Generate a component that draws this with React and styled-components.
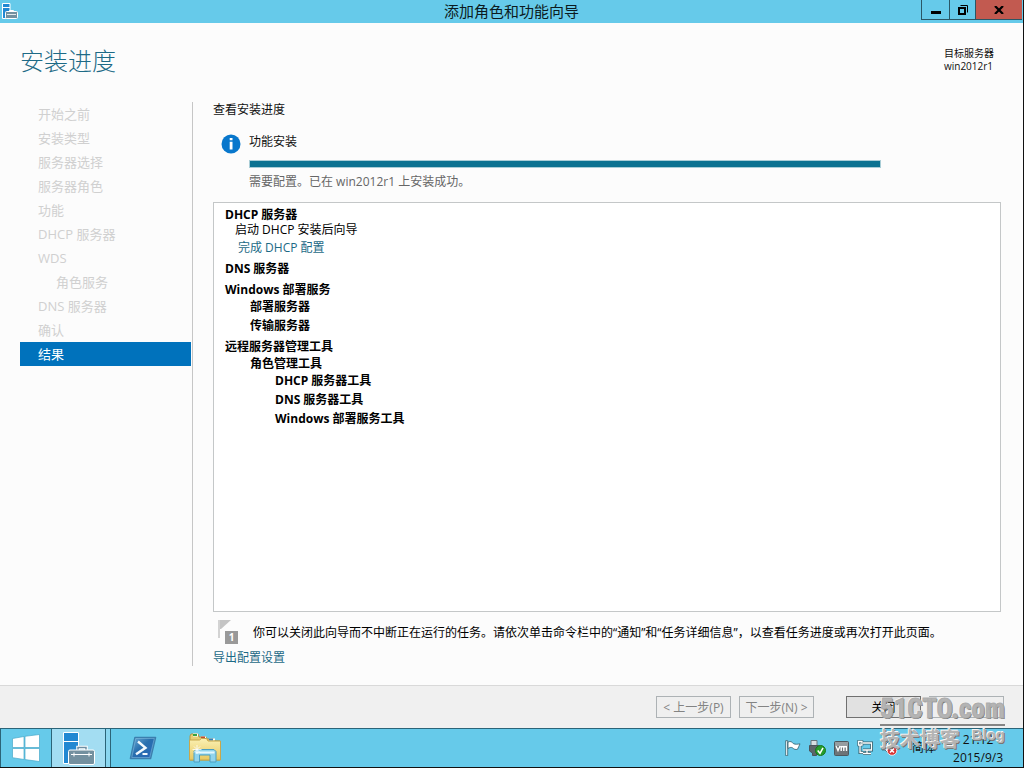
import React from 'react';
import styled, { createGlobalStyle } from 'styled-components';

const GlobalStyle = createGlobalStyle`
  * {
    box-sizing: border-box;
  }

  body {
    margin: 0;
    font-family: 'Open Sans', 'Noto Sans CJK SC', sans-serif;
    font-size: 12px;
    line-height: 16px;
    color: #111;
  }

  h1, h2, h3, p, ul, ol {
    margin: 0;
    padding: 0;
    font-size: inherit;
    font-weight: inherit;
  }

  ul, ol {
    list-style: none;
  }

  button {
    font: inherit;
    padding: 0;
  }

  svg {
    display: block;
  }
`;

const Desktop = styled.div`
  position: relative;
  min-height: 100vh;
  display: flex;
  flex-direction: column;
  background: #fcfcfc;
  border-right: 1px solid #111;
  border-bottom: 1px solid #111;
`;

const TitleBar = styled.header`
  height: 23px;
  display: grid;
  grid-template-columns: 1fr auto 1fr;
  background: #66caea;

  h1 {
    font-size: 15px;
    line-height: 23px;
    color: #0c1a20;
  }
`;

const AppIcon = styled.div`
  padding: 3px 0 0 2px;
`;

const WindowControls = styled.div`
  display: flex;
  justify-content: flex-end;
  align-items: flex-start;
  padding-right: 1px;
`;

const ControlButton = styled.button`
  width: ${(p) => p.$width};
  height: 20px;
  display: flex;
  align-items: center;
  justify-content: center;
  background: ${(p) => (p.$close ? '#c25a50' : '#66caea')};
  border: 1px solid #2a5766;
  border-width: 0 0 1px 1px;
`;

const PageHeader = styled.div`
  display: flex;
  justify-content: space-between;
  align-items: flex-start;
  height: 79px;
  padding: 22px 29px 0 20px;

  h2 {
    font-size: 24px;
    font-weight: 300;
    line-height: 32px;
    color: #1d6a86;
  }
`;

const Target = styled.p`
  padding-top: 2px;
  line-height: 13px;
  font-size: 10px;
`;

const Wizard = styled.main`
  flex: 1;
  display: flex;
  padding: 0 22px 19px 20px;
`;

const Steps = styled.nav`
  width: 173px;
  flex: none;
  border-right: 1px solid #c6c6c6;
  padding-right: 1px;
`;

const Step = styled.li`
  height: 24px;
  padding-left: ${(p) => (p.$nested ? '36px' : '18px')};
  font-size: 13px;
  line-height: 24px;
  color: ${(p) => (p.$current ? '#fff' : '#d0d0d0')};
  background: ${(p) => (p.$current ? '#0072bc' : 'transparent')};
`;

const Content = styled.section`
  flex: 1;
  min-width: 0;
  display: flex;
  flex-direction: column;
  padding-left: 20px;
`;

const Status = styled.div`
  display: grid;
  grid-template-columns: 20px minmax(0, 632px);
  column-gap: 8px;
  padding: 16px 0 12px 8px;
`;

const Progress = styled.div`
  height: 8px;
  margin: 10px 0 6px;
  background: #0b7291;
  border: 1px solid #a9cdd6;
`;

const Muted = styled.p`
  color: #666;
`;

const Results = styled.div`
  flex: 1;
  display: flex;
  flex-direction: column;
  gap: 6px;
  padding: 4px 11px;
  background: #fff;
  border: 1px solid #c4c7c8;
  line-height: 15px;
  color: #000;
`;

const Feature = styled.h3`
  font-weight: 700;
`;

const Children = styled.ul`
  display: flex;
  flex-direction: column;
  gap: 4px;
  padding: 2px 0 0 25px;
`;

const Task = styled.p`
  padding-left: 10px;
`;

const Link = styled.a`
  color: #1d6a86;
  text-decoration: none;
`;

const TaskLink = styled.p`
  padding: 3px 0 0 13px;
`;

const Notice = styled.div`
  display: flex;
  gap: 14px;
  padding: 7px 0 0 4px;
  color: #000;

  p {
    padding-top: 6px;
    white-space: nowrap;
  }
`;

const ExportRow = styled.p`
  padding-top: 4px;
`;

const Footer = styled.footer`
  display: flex;
  justify-content: flex-end;
  gap: 8px;
  height: 43px;
  padding: 10px 19px 0;
  background: #f0f0f0;
  border-top: 1px solid #d9d9d9;
`;

const WizardButton = styled.button`
  width: 75px;
  height: 22px;
  padding-top: 2px;
  line-height: 18px;
  color: ${(p) => (p.disabled ? '#838383' : '#000')};
  background: ${(p) => (p.disabled ? '#efefef' : '#e1e1e1')};
  border: 1px solid ${(p) => (p.disabled ? '#adb2b5' : '#707070')};
  margin-left: ${(p) => (p.$apart ? '24px' : '0')};
`;

const Taskbar = styled.div`
  display: flex;
  height: 39px;
  background: #66caea;
  border-top: 1px solid #2b6478;
  border-left: 1px solid #2b6478;
`;

const TaskButton = styled.button`
  width: ${(p) => p.$width};
  display: flex;
  align-items: center;
  justify-content: center;
  background: ${(p) => (p.$active ? '#a3ddf2' : 'transparent')};
  border: solid #2b6478;
  border-width: ${(p) => (p.$active ? '0 1px' : '0')};
`;

const StackEdge = styled.div`
  width: 5px;
  background: #8ad6ef;
  border-right: 1px solid #2b6478;
`;

const Tray = styled.div`
  flex: 1;
  display: flex;
  justify-content: flex-end;
  align-items: center;
  gap: 8px;
  padding-right: 20px;
`;

const InputMode = styled.span`
  padding: 0 9px 0 6px;
`;

const Clock = styled.time`
  display: flex;
  flex-direction: column;
  align-items: center;
  line-height: 18px;
  padding-top: 2px;
`;

const Watermark = styled.div`
  position: absolute;
  right: 18px;
  bottom: 13px;
  width: 125px;
  pointer-events: none;
  color: #b4b4b4;
  font-weight: 700;
  text-shadow: -1px -1px 0 #f6f6f6, 1px 1px 0 #777;
`;

const WatermarkName = styled.div`
  font-family: 'Liberation Sans Narrow', 'Roboto Condensed', 'Liberation Sans', sans-serif;
  font-size: 27px;
  line-height: 30px;
  text-align: right;
  white-space: nowrap;
  -webkit-text-stroke: 1px #acacac;
  border-bottom: 2px solid #858585;
`;

const WatermarkSub = styled.div`
  display: flex;
  justify-content: space-between;
  align-items: flex-start;
  font-size: 20px;
  line-height: 28px;

  small {
    font-family: 'Liberation Sans', sans-serif;
    font-size: 15px;
    line-height: 18px;
  }
`;

const ServerIcon = () => (
  <svg width="32" height="33" viewBox="0 0 32 33" fill="none">
    <path d="M.5.5h15v31H.5z" fill="#2188d2" stroke="#fff" />
    <path d="M.5 9.500h15" stroke="#fff" />
    <path d="M15 18v-2.500h8V18" stroke="#fff" strokeWidth="3.500" />
    <path d="M15 18v-2.500h8V18" stroke="#6c8ea3" strokeWidth="1.500" />
    <rect x="5.500" y="18" width="26" height="14.500" rx="1.500" fill="#73909f" stroke="#fff" />
    <path d="M8 22.500h21M11 20.500v4M26 20.500v4" stroke="#fff" />
  </svg>
);

const SmallServerIcon = () => (
  <svg width="16" height="16" viewBox="0 0 16 16" fill="none">
    <path d="M.5.5h7.500v15H.5z" fill="#2188d2" stroke="#fff" />
    <path d="M.5 4.500H8" stroke="#fff" />
    <path d="M7.500 9V7.500h4V9" stroke="#fff" />
    <rect x="3.500" y="8.500" width="12" height="7" rx="1" fill="#73909f" stroke="#fff" />
    <path d="M5 11.500h9" stroke="#fff" strokeWidth=".8" />
  </svg>
);

const InfoIcon = () => (
  <svg width="20" height="20" viewBox="0 0 20 20">
    <circle cx="10" cy="10" r="9.500" fill="#0877cc" />
    <path d="M8.700 4h2.800v2.300H8.700zM8.700 7.800h2.800V15.500H8.700z" fill="#fff" />
  </svg>
);

const NoticeIcon = () => (
  <svg width="22" height="27" viewBox="0 0 22 27">
    <path d="M1 1h2v18H1z" fill="#d3d3d3" />
    <path d="M3 1h11L4 10H3z" fill="#c4c4c4" />
    <rect x="8" y="12" width="13" height="13" fill="#999" />
    <text x="14.500" y="22" fontSize="10" fontWeight="700" fill="#fff" textAnchor="middle">1</text>
  </svg>
);

const WindowsLogo = () => (
  <svg width="28" height="28" viewBox="0 0 28 28" fill="#fff" stroke="#48a9ca" strokeWidth=".7">
    <path d="M.5 4.500l11.500-2v11H.5zM13 2.300L27.500.5v13H13zM.5 14.500H12v11l-11.500-1.800zM13 14.500h14.500v13L13 25.600z" />
  </svg>
);

const PowerShellIcon = () => (
  <svg width="28" height="24" viewBox="0 0 28 24">
    <defs>
      <linearGradient id="ps" x1="0" y1="0" x2="1" y2="1">
        <stop offset="0" stopColor="#70afd8" />
        <stop offset=".45" stopColor="#286fae" />
        <stop offset="1" stopColor="#2865ba" />
      </linearGradient>
    </defs>
    <path d="M6 1.500h20.500L21.500 22.500H1.500z" fill="url(#ps)" stroke="#3b7fae" strokeWidth="1.600" strokeLinejoin="round" />
    <path d="M6.700 2.500h18.600L20.700 21.500H2.800z" fill="none" stroke="#8cc4e4" strokeWidth=".5" />
    <path d="M9 5.500l7.500 6.300-9.500 6.500" fill="none" stroke="#f2f9fd" strokeWidth="2.400" />
    <path d="M13.500 18h5" stroke="#f2f9fd" strokeWidth="2" />
  </svg>
);

const ExplorerIcon = () => (
  <svg width="34" height="32" viewBox="0 0 34 32">
    <defs>
      <linearGradient id="folder" x1="0" y1="0" x2="0" y2="1">
        <stop offset="0" stopColor="#fbf1b4" />
        <stop offset="1" stopColor="#e7c860" />
      </linearGradient>
    </defs>
    <path d="M2 4l1-2h7l1 3h7l1 2h7l1 2h5v19H2z" fill="#e8ce76" stroke="#b79843" />
    <path d="M5 1.500h5v3H5zM13 4.500h5v2h-5zM21 6.500h6v2h-6z" fill="#fff" />
    <path d="M5 2h4v2H5z" fill="#35a443" />
    <path d="M13 4.500h4v2h-4z" fill="#bd4b30" />
    <path d="M21 6.500h4v2h-4z" fill="#3880b5" />
    <path d="M1.500 8h10l2-1.500h5L20 9h12.500v19h-31z" fill="url(#folder)" stroke="#c8a74b" />
    <path d="M6 30V19.500l2-2h18l2 2V30h-6v-7H11.500v7z" fill="#91d4ed" stroke="#4b9fc1" />
    <path d="M7.500 20.500h19" stroke="#e2f8ff" strokeWidth="2" />
    <path d="M9 13v9M4.500 17.500h9M6 14.500l6 6M12 14.500l-6 6" stroke="#fff" strokeWidth=".8" />
  </svg>
);

const FlagIcon = () => (
  <svg width="16" height="16" viewBox="0 0 16 16">
    <path d="M.7.700h2v15h-2z" fill="#fff" stroke="#315d6b" strokeWidth=".8" />
    <path d="M3 2c3-1.300 4 .2 5.500 1.700 2 .8 4 .6 6.500.1-.7 2-2 4-2.500 5.500-2 .5-3.500 0-5-1.500C6 7 4.500 7.500 3 8.500z" fill="#fff" stroke="#315d6b" strokeWidth=".8" />
  </svg>
);

const UsbIcon = () => (
  <svg width="17" height="16" viewBox="0 0 17 16">
    <path d="M2 .5h6V6H2z" fill="#d7dfe2" stroke="#66747b" />
    <path d="M.5 5.500h9V11L7.500 13v2.500h-4V13l-3-2z" fill="#5c656a" stroke="#4a555b" />
    <circle cx="11.500" cy="10.500" r="5" fill="#279d2b" stroke="#16761c" />
    <path d="M8.700 10.500l2.300 2.800L14 7.800" fill="none" stroke="#fff" strokeWidth="1.500" />
  </svg>
);

const VmIcon = () => (
  <svg width="15" height="15" viewBox="0 0 15 15">
    <rect x=".5" y=".5" width="14" height="14" rx="1" fill="#6d7477" stroke="#4e585d" />
    <path d="M1 1h13v4H1z" fill="#969da0" />
    <path d="M2 5l2 4.500L6 5M7.200 10V5.700h2.600V10M9.800 5.700h2.700V10" fill="none" stroke="#fff" strokeWidth="1.400" />
  </svg>
);

const NetworkIcon = () => (
  <svg width="16" height="16" viewBox="0 0 16 16" fill="none">
    <path d="M6 3h8.500v7H6M10 10v3.500M6 13.500h8M3 5v7.500h3" stroke="#315d6b" strokeWidth="3" />
    <path d="M1.500 1.500h3.500V5H1.500z" fill="#fff" stroke="#315d6b" strokeWidth="2.500" />
    <path d="M6 3h8.500v7H6M10 10v3.500M6 13.500h8M3 5v7.500h3M1.500 1.500h3.500V5H1.500z" stroke="#fff" strokeWidth="1.300" />
  </svg>
);

const MutedSpeakerIcon = () => (
  <svg width="17" height="16" viewBox="0 0 17 16">
    <path d="M1 5h3l4-4v13l-4-4H1z" fill="#fff" stroke="#315d6b" strokeWidth=".8" />
    <circle cx="11" cy="10.500" r="4.800" fill="#d63232" stroke="#fff" strokeWidth=".8" />
    <path d="M9 8.500l4 4M13 8.500l-4 4" stroke="#fff" strokeWidth="1.600" />
  </svg>
);

const steps = [
  '开始之前',
  '安装类型',
  '服务器选择',
  '服务器角色',
  '功能',
  'DHCP 服务器',
  'WDS',
  '角色服务',
  'DNS 服务器',
  '确认',
  '结果',
];

const App = () => {
  return (
    <Desktop>
      <GlobalStyle />
      <TitleBar>
        <AppIcon>
          <SmallServerIcon />
        </AppIcon>
        <h1>添加角色和功能向导</h1>
        <WindowControls>
          <ControlButton $width="28px" aria-label="最小化">
            <svg width="10" height="10" viewBox="0 0 10 10">
              <path d="M0 6h10v3H0z" />
            </svg>
          </ControlButton>
          <ControlButton $width="26px" aria-label="还原">
            <svg width="10" height="10" viewBox="0 0 10 10" fill="none" stroke="#000">
              <path d="M1 3h6v6H1z" strokeWidth="2" />
              <path d="M2.500.5h7v7" />
            </svg>
          </ControlButton>
          <ControlButton $width="47px" $close aria-label="关闭窗口">
            <svg width="10" height="8" viewBox="0 0 10 8">
              <path d="M1 0l8 8M9 0L1 8" stroke="#000" strokeWidth="2.200" />
            </svg>
          </ControlButton>
        </WindowControls>
      </TitleBar>

      <PageHeader>
        <h2>安装进度</h2>
        <Target>
          目标服务器
          <br />
          win2012r1
        </Target>
      </PageHeader>

      <Wizard>
        <Steps>
          <ol>
            {steps.map((step) => (
              <Step key={step} $nested={step === '角色服务'} $current={step === '结果'}>
                {step}
              </Step>
            ))}
          </ol>
        </Steps>
        <Content>
          <p>查看安装进度</p>
          <Status>
            <InfoIcon />
            <div>
              <p>功能安装</p>
              <Progress role="progressbar" aria-label="功能安装" aria-valuenow={100} />
              <Muted>需要配置。已在 win2012r1 上安装成功。</Muted>
            </div>
          </Status>
          <Results>
            <div>
              <Feature>DHCP 服务器</Feature>
              <Task>启动 DHCP 安装后向导</Task>
              <TaskLink>
                <Link href="#dhcp">完成 DHCP 配置</Link>
              </TaskLink>
            </div>
            <Feature>DNS 服务器</Feature>
            <div>
              <Feature>Windows 部署服务</Feature>
              <Children>
                <li><Feature>部署服务器</Feature></li>
                <li><Feature>传输服务器</Feature></li>
              </Children>
            </div>
            <div>
              <Feature>远程服务器管理工具</Feature>
              <Children>
                <li>
                  <Feature>角色管理工具</Feature>
                  <Children>
                    <li><Feature>DHCP 服务器工具</Feature></li>
                    <li><Feature>DNS 服务器工具</Feature></li>
                    <li><Feature>Windows 部署服务工具</Feature></li>
                  </Children>
                </li>
              </Children>
            </div>
          </Results>
          <Notice>
            <NoticeIcon />
            <p>你可以关闭此向导而不中断正在运行的任务。请依次单击命令栏中的“通知”和“任务详细信息”，以查看任务进度或再次打开此页面。</p>
          </Notice>
          <ExportRow>
            <Link href="#export">导出配置设置</Link>
          </ExportRow>
        </Content>
      </Wizard>

      <Footer>
        <WizardButton disabled>&lt; 上一步(P)</WizardButton>
        <WizardButton disabled>下一步(N) &gt;</WizardButton>
        <WizardButton $apart>关闭</WizardButton>
        <WizardButton disabled aria-label="取消" />
      </Footer>

      <Taskbar>
        <TaskButton $width="50px" aria-label="开始">
          <WindowsLogo />
        </TaskButton>
        <TaskButton $width="55px" $active aria-label="服务器管理器">
          <ServerIcon />
        </TaskButton>
        <StackEdge />
        <TaskButton $width="64px" aria-label="PowerShell">
          <PowerShellIcon />
        </TaskButton>
        <TaskButton $width="60px" aria-label="文件资源管理器">
          <ExplorerIcon />
        </TaskButton>
        <Tray>
          <FlagIcon />
          <UsbIcon />
          <VmIcon />
          <NetworkIcon />
          <MutedSpeakerIcon />
          <InputMode>简体</InputMode>
          <Clock>
            <span>21:12</span>
            <span>2015/9/3</span>
          </Clock>
        </Tray>
      </Taskbar>

      <Watermark>
        <WatermarkName>51CTO.com</WatermarkName>
        <WatermarkSub>
          <span>技术博客</span>
          <small>Blog</small>
        </WatermarkSub>
      </Watermark>
    </Desktop>
  );
};

export default App;
